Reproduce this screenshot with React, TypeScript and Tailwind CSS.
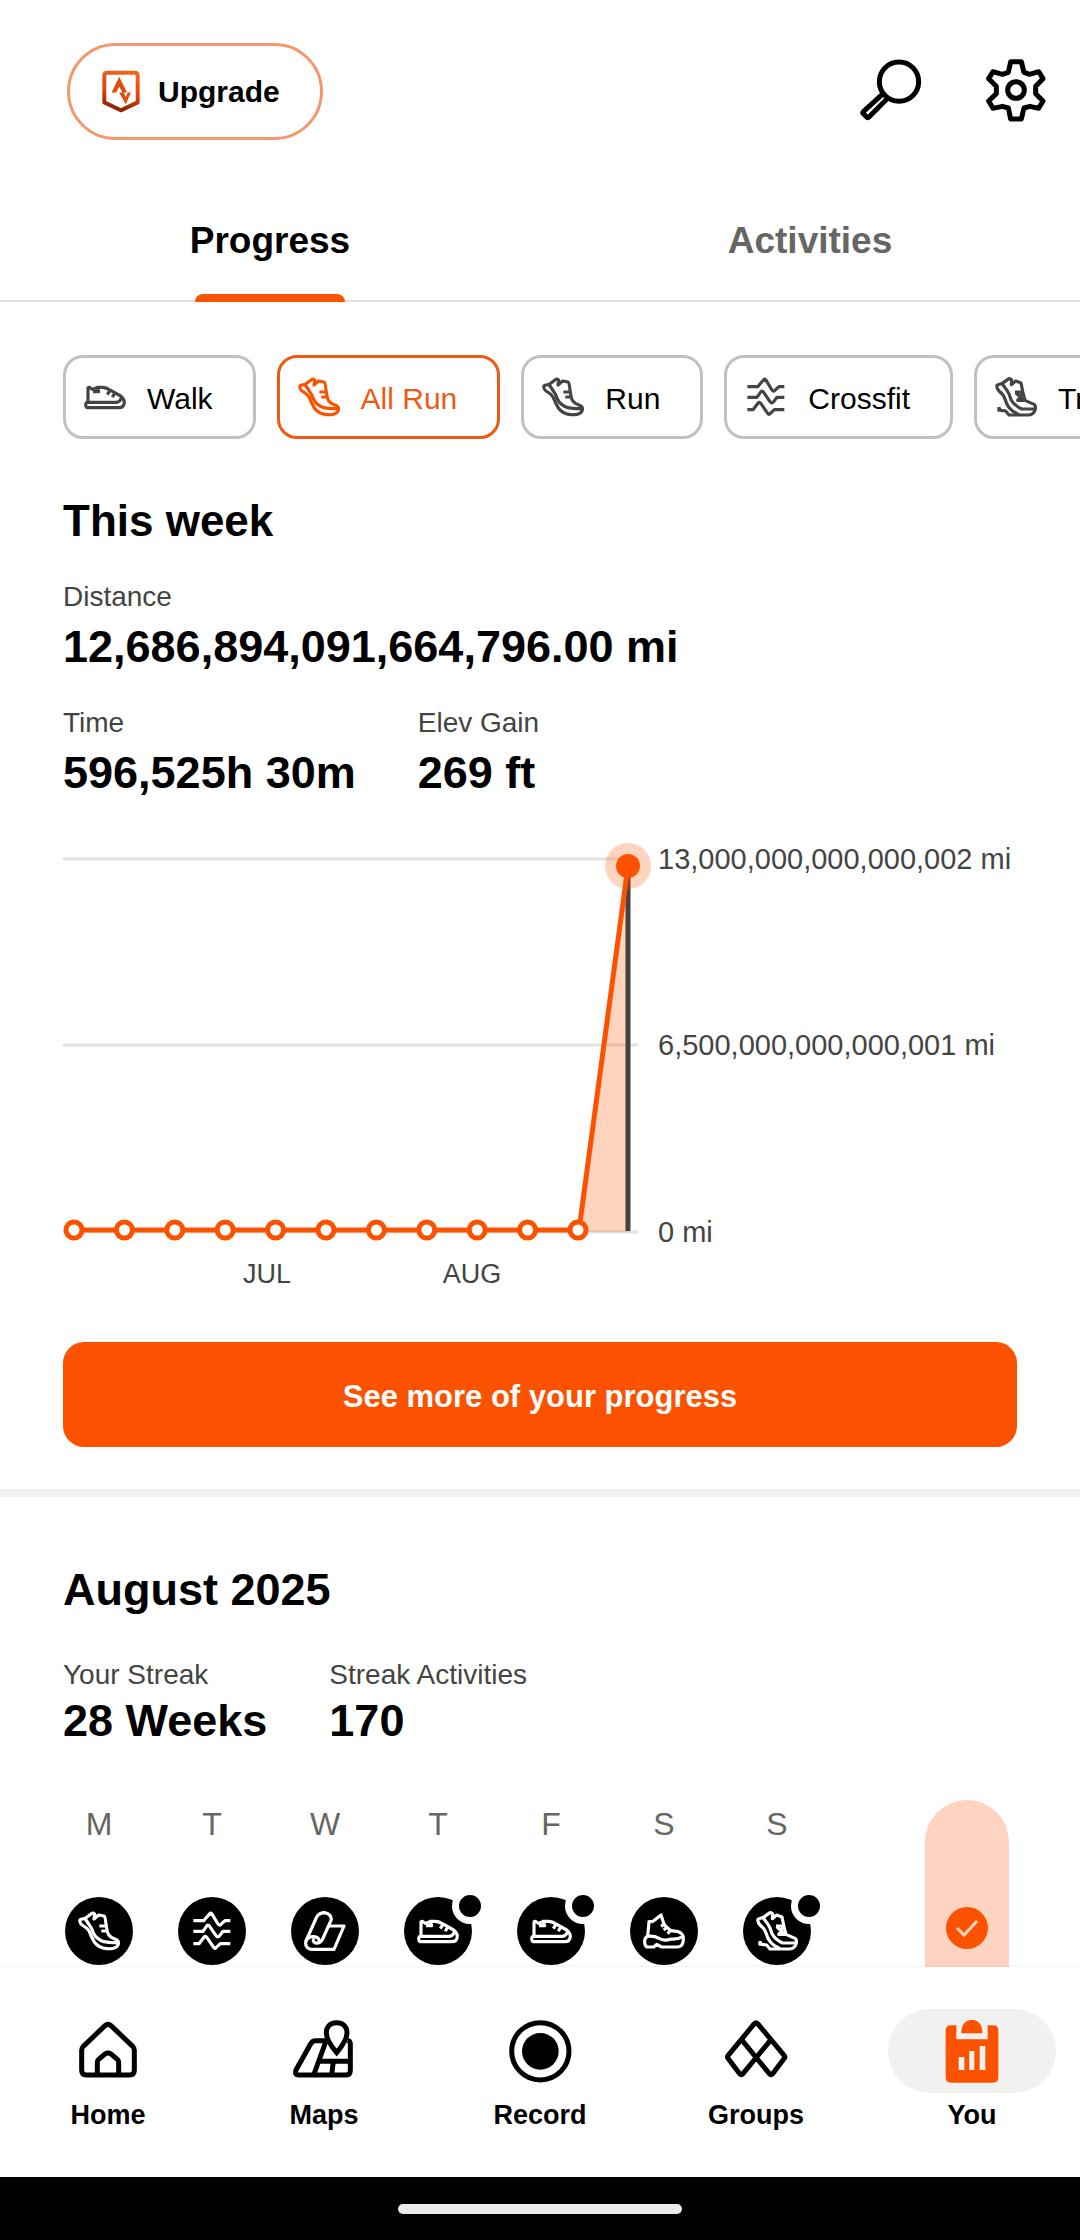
import { useState, type ReactNode } from "react";

type IconProps = { className?: string };

// Sport glyphs share one 126 unit box
function SportIcon({ className, children }: IconProps & { children: ReactNode }) {
  return (
    <svg
      viewBox="0 0 126 120"
      className={className}
      fill="none"
      stroke="currentColor"
      strokeWidth="9.5"
      strokeLinejoin="round"
      aria-hidden="true"
    >
      {children}
    </svg>
  );
}

function RunIcon({ className }: IconProps) {
  return (
    <SportIcon className={className}>
      <path d="M5 29Q5 26 9 25L22 22L40 8Q45 4 50 9L48 24L62 12L78 15Q82 17 84 40L88 62Q90 72 100 79L117 87Q123 91 121 99Q118 109 106 112Q96 114 86 113Q62 111 49 93Q40 78 34 62Q29 52 12 42Q6 38 5 29Z" />
      <path d="M22 24L34 42Q42 52 46 66Q54 84 78 92Q100 97 121 94M64 45H84M70 60H88" />
    </SportIcon>
  );
}

function TrailIcon({ className }: IconProps) {
  return (
    <SportIcon className={className}>
      <path d="M5 27Q5 24 9 23L22 19L42 5Q46 4 50 9L49 23L62 12L78 18L84 48L90 70L117 82Q123 87 121 97Q116 114 98 114H42L32 102L18 100L10 93" />
      <path d="M5 27Q6 36 13 43Q26 52 31 68Q36 90 54 103L72 113M22 21L36 40Q44 52 48 68Q58 86 80 96L120 96M60 45H82M62 47L86 70H68L82 48" />
      <path d="M12 90V104" />
    </SportIcon>
  );
}

function WalkIcon({ className }: IconProps) {
  return (
    <SportIcon className={className}>
      <path d="M12 75V33Q15 29 19 33L26 37L40 31L44 44H27M37 31H56Q68 32 76 38L110 57Q121 66 121 76Q120 92 104 92H10Q5 90 5 84Q5 76 12 76H98Q108 74 112 64M78 40L70 53M92 48L85 61" />
    </SportIcon>
  );
}

function CrossfitIcon({ className }: IconProps) {
  return (
    <SportIcon className={className}>
      <path d="M7 29H38L56 8Q59 4 62 8L81 39Q87 46 92 38L102 29H118" />
      <path d="M7 61H36L48 44Q52 40 56 46L75 74Q80 82 86 74L96 61H118" />
      <path d="M7 98H24L40 77Q44 74 48 80L68 109Q72 115 76 109L88 98H118" />
    </SportIcon>
  );
}

function YogaIcon({ className }: IconProps) {
  return (
    <SportIcon className={className}>
      <path d="M5 92L38 18Q46 5 62 5Q82 9 82 26L56 84Q49 98 34 96Q23 90 31 83" />
      <path d="M5 92Q12 76 30 77Q46 79 46 92M5 92Q3 112 22 115H90L120 45H75" />
    </SportIcon>
  );
}

function HikeIcon({ className }: IconProps) {
  return (
    <SportIcon className={className}>
      <path d="M14 76L18 32L30 31L38 25L54 12L60 30Q62 44 84 59L106 62Q122 68 121 84Q121 107 104 108H56L41 100L32 108H12Q4 104 5 88Q8 77 14 76Q34 74 48 82Q62 92 84 84Q104 86 120 76" />
      <path d="M66 38L54 46M74 48L62 57M84 56L74 68" />
    </SportIcon>
  );
}

function ShieldIcon() {
  return (
    <svg viewBox="0 0 115 128" className="h-[43px] w-[38px]" aria-hidden="true">
      <defs>
        <linearGradient id="shield" x1="0.6" y1="0" x2="0.4" y2="1">
          <stop offset="0" stopColor="#f0641e" />
          <stop offset="0.5" stopColor="#df4a0e" />
          <stop offset="1" stopColor="#8a2208" />
        </linearGradient>
      </defs>
      <path
        d="M16 7H99Q108 7 108 16V97L57 121L7 97V16Q7 7 16 7Z"
        fill="none"
        stroke="url(#shield)"
        strokeWidth="12"
        strokeLinejoin="round"
      />
      <path d="M52 19L29 67H43L52 50L62 67H76ZM52 67L72 103L87 67H78L72 81L66 67Z" fill="#e04c0c" />
    </svg>
  );
}

function SearchIcon() {
  return (
    <svg viewBox="0 0 192 192" className="size-16" fill="none" stroke="#000" strokeWidth="15" aria-hidden="true">
      <circle cx="123" cy="71" r="59" />
      <path d="M72 110L16 161Q13 164 16 167L27 178Q30 180 33 177L86 124" strokeLinejoin="round" />
    </svg>
  );
}

function GearIcon() {
  return (
    <svg
      viewBox="0 0 192 192"
      className="size-16"
      fill="none"
      stroke="#000"
      strokeWidth="15"
      strokeLinejoin="round"
      aria-hidden="true"
    >
      <path d="M80 11H112L120 43L137 49L164 41L177 62L155 85V107L177 129L164 151L138 145L120 150L112 183H80L73 150L55 145L27 151L14 129L37 107V85L14 62L27 41L55 49L73 43Z" />
      <circle cx="96" cy="96" r="25" />
    </svg>
  );
}

function NavIcon({ children }: { children: ReactNode }) {
  return (
    <svg
      viewBox="0 0 189 189"
      className="size-[63px]"
      fill="none"
      stroke="#000"
      strokeWidth="15"
      strokeLinejoin="round"
      aria-hidden="true"
    >
      {children}
    </svg>
  );
}

const navItems = [
  {
    label: "Home",
    icon: (
      <NavIcon>
        <path d="M84 17Q93 9 102 17L168 80Q172 84 172 91V151Q172 165 158 165H28Q14 165 14 151V91Q14 84 18 80Z" />
        <path d="M61 165V128Q61 122 65 118L84 102Q93 96 102 102L121 118Q125 122 125 128V165" />
      </NavIcon>
    ),
  },
  {
    label: "Maps",
    icon: (
      <NavIcon>
        <path d="M100 62H68Q58 62 53 71L9 150Q4 165 17 165H160Q172 165 172 151V72Q172 63 164 61" />
        <path d="M98 66L62 165M76 124H174M121 124L116 165" />
        <path
          d="M131 98C116 80 100 60 100 39C100 18 113 8 131 8C149 8 162 18 162 39C162 60 146 80 131 98Z"
          fill="#fff"
          strokeLinejoin="miter"
        />
      </NavIcon>
    ),
  },
  {
    label: "Record",
    icon: (
      <NavIcon>
        <circle cx="94" cy="94" r="86" />
        <circle cx="94" cy="94" r="55" fill="#000" stroke="none" />
      </NavIcon>
    ),
  },
  {
    label: "Groups",
    icon: (
      <NavIcon>
        <path d="M88 11Q93 6 98 11L178 107Q181 111 178 115L143 161Q138 166 133 161L49 58M138 59L54 161Q49 166 44 161L9 115Q6 111 9 107L88 11" />
      </NavIcon>
    ),
  },
  {
    label: "You",
    icon: (
      <NavIcon>
        <g stroke="none" fill="#fc5200">
          <path d="M30 16H46V58H140V16H156Q172 16 172 32V172Q172 188 156 188H30Q14 188 14 172V32Q14 16 30 16Z" />
          <path d="M61 40V31A31 31 0 0 1 124 31V40Z" />
          <path d="M53 111H70V150H53ZM85 93H100V150H85ZM116 78H133V150H116Z" fill="#f1f1ef" />
        </g>
      </NavIcon>
    ),
  },
];

const sports = [
  { label: "Walk", Icon: WalkIcon },
  { label: "All Run", Icon: RunIcon },
  { label: "Run", Icon: RunIcon },
  { label: "Crossfit", Icon: CrossfitIcon },
  { label: "Trail Run", Icon: TrailIcon },
];

const week = [
  { day: "M", Icon: RunIcon, more: false },
  { day: "T", Icon: CrossfitIcon, more: false },
  { day: "W", Icon: YogaIcon, more: false },
  { day: "T", Icon: WalkIcon, more: true },
  { day: "F", Icon: WalkIcon, more: true },
  { day: "S", Icon: HikeIcon, more: false },
  { day: "S", Icon: TrailIcon, more: true },
];

const gridLines = [
  { y: 19, label: "13,000,000,000,000,002 mi" },
  { y: 205, label: "6,500,000,000,000,001 mi" },
  { y: 392, label: "0 mi" },
];

const weeks = Array.from({ length: 11 }, (_, i) => 11 + i * 50.4);

function ProgressChart() {
  return (
    <svg
      viewBox="0 0 954 450"
      className="mt-[41px] block w-full overflow-visible"
      role="img"
      aria-label="Distance per week"
    >
      {gridLines.map((line) => (
        <g key={line.y}>
          <path d={`M0 ${line.y}H575`} stroke="#e2e2e2" strokeWidth="3" />
          <text x="595" y={line.y + 10} fontSize="29" fill="#444442">
            {line.label}
          </text>
        </g>
      ))}
      <path d="M515 391L565 26V392H515Z" fill="#fc5200" fillOpacity="0.25" />
      <path d="M565 26V391" stroke="#43423f" strokeWidth="5" />
      <path d="M11 390H516L565 26" fill="none" stroke="#fc5200" strokeWidth="5" />
      {weeks.map((x) => (
        <circle key={x} cx={x} cy="390" r="8" fill="#fff" stroke="#fc5200" strokeWidth="5" />
      ))}
      <circle cx="565" cy="26" r="23" fill="#fc5200" fillOpacity="0.25" />
      <circle cx="565" cy="26" r="12" fill="#fc5200" />
      <g fontSize="27" fill="#444442" textAnchor="middle">
        <text x="204" y="443">JUL</text>
        <text x="409" y="443">AUG</text>
      </g>
    </svg>
  );
}

function Stat({ label, value, tight }: { label: string; value: string; tight?: boolean }) {
  return (
    <div>
      <p className="text-[28px] leading-9 text-[#444442]">{label}</p>
      <p className={`text-[45px] leading-[52px] font-bold ${tight ? "mt-0.5" : "mt-1.5"}`}>{value}</p>
    </div>
  );
}

export default function App() {
  const [tab, setTab] = useState("Progress");
  const [sport, setSport] = useState("All Run");

  return (
    <div className="flex h-screen flex-col bg-white font-['Liberation_Sans',Arial,sans-serif] text-black">
      <main className="min-h-0 flex-1 overflow-y-auto [scrollbar-width:none]">
        <header className="flex items-center justify-between pt-[43px] pr-8 pb-[42px] pl-[67px]">
          <button className="flex h-[97px] items-center gap-[18px] rounded-full border-[3px] border-[#f4976c] pr-10 pl-8 text-[30px] font-bold">
            <ShieldIcon />
            Upgrade
          </button>
          <div className="flex gap-[62px] pb-1">
            <button aria-label="Search">
              <SearchIcon />
            </button>
            <button aria-label="Settings">
              <GearIcon />
            </button>
          </div>
        </header>

        <div className="flex h-[120px] border-b-2 border-[#e0e0e0]">
          {["Progress", "Activities"].map((name) => (
            <button
              key={name}
              onClick={() => setTab(name)}
              className={`relative flex-1 text-[37px] font-bold ${tab === name ? "text-black" : "text-[#666662]"}`}
            >
              {name}
              {tab === name && (
                <span className="absolute -bottom-0.5 left-1/2 h-2 w-[150px] -translate-x-1/2 rounded-t-lg bg-[#fc5200]" />
              )}
            </button>
          ))}
        </div>

        <div className="mt-[53px] flex gap-[21px] overflow-x-auto pl-[63px] [scrollbar-width:none]">
          {sports.map(({ label, Icon }) => (
            <button
              key={label}
              onClick={() => setSport(label)}
              className={`flex h-[84px] shrink-0 items-center gap-[21px] rounded-[20px] border-[3px] pr-10 pl-[18px] text-[30px] ${
                sport === label ? "border-[#ec5a13] text-[#ec5a13]" : "border-[#c2c2bd]"
              }`}
            >
              <Icon className={`h-10 w-[42px] ${sport === label ? "text-[#fc5200]" : "text-[#444442]"}`} />
              <span className="pt-0.5">{label}</span>
            </button>
          ))}
        </div>

        <section className="px-[63px] pt-14 pb-[42px]">
          <h2 className="text-[44px] leading-[52px] font-bold">This week</h2>
          <div className="mt-8">
            <Stat label="Distance" value="12,686,894,091,664,796.00 mi" />
          </div>
          <div className="mt-8 flex gap-[62px]">
            <Stat label="Time" value="596,525h 30m" />
            <Stat label="Elev Gain" value="269 ft" />
          </div>
          <ProgressChart />
          <button className="mt-[52px] h-[105px] w-full rounded-[21px] bg-[#fc5200] pt-1.5 text-[31px] font-bold text-white">
            See more of your progress
          </button>
        </section>

        <section className="border-t-8 border-[#f1f1ef] px-[63px] pt-[67px]">
          <h2 className="text-[45px] leading-[52px] font-bold">August 2025</h2>
          <div className="mt-[41px] flex gap-[62px]">
            <Stat label="Your Streak" value="28 Weeks" tight />
            <Stat label="Streak Activities" value="170" tight />
          </div>
          <div className="mt-[53px] flex justify-between">
            <div className="flex gap-[41px]">
              {week.map(({ day, Icon, more }, i) => (
                <div key={i} className="flex w-[72px] flex-col items-center pt-1">
                  <span className="text-[32px] leading-10 text-[#666662]">{day}</span>
                  <div className="relative mt-[53px] flex size-[68px] items-center justify-center rounded-full bg-black text-white">
                    <Icon className="h-10 w-[42px]" />
                    {more && (
                      <span className="absolute -top-[9px] -right-4 size-9 rounded-full border-[7px] border-white bg-black" />
                    )}
                  </div>
                </div>
              ))}
            </div>
            <div className="mr-2 flex h-[400px] w-[84px] justify-center rounded-full bg-[#fed3bf] pt-[107px]">
              <span className="flex size-[42px] items-center justify-center rounded-full bg-[#fc5200]">
                <svg viewBox="0 0 24 20" className="h-5 w-6" fill="none" stroke="#fed3bf" strokeWidth="3" aria-hidden="true">
                  <path d="M2 10L9 17L22 3" />
                </svg>
              </span>
            </div>
          </div>
        </section>
      </main>

      <nav className="relative flex bg-white pt-[42px] pb-11 shadow-[0_0_4px_rgba(0,0,0,0.08)]">
        {navItems.map(({ label, icon }) => (
          <a key={label} href={`#${label.toLowerCase()}`} className="flex flex-1 flex-col items-center">
            <span
              className={`flex h-[84px] w-[168px] items-center justify-center rounded-full ${
                label === "You" ? "bg-[#f1f1ef]" : ""
              }`}
            >
              {icon}
            </span>
            <span className="mt-1 text-[27px] leading-9 font-bold">{label}</span>
          </a>
        ))}
      </nav>
      <div className="flex h-[63px] shrink-0 items-center justify-center bg-black">
        <span className="h-2.5 w-[284px] rounded-full bg-[#ebebeb]" />
      </div>
    </div>
  );
}
